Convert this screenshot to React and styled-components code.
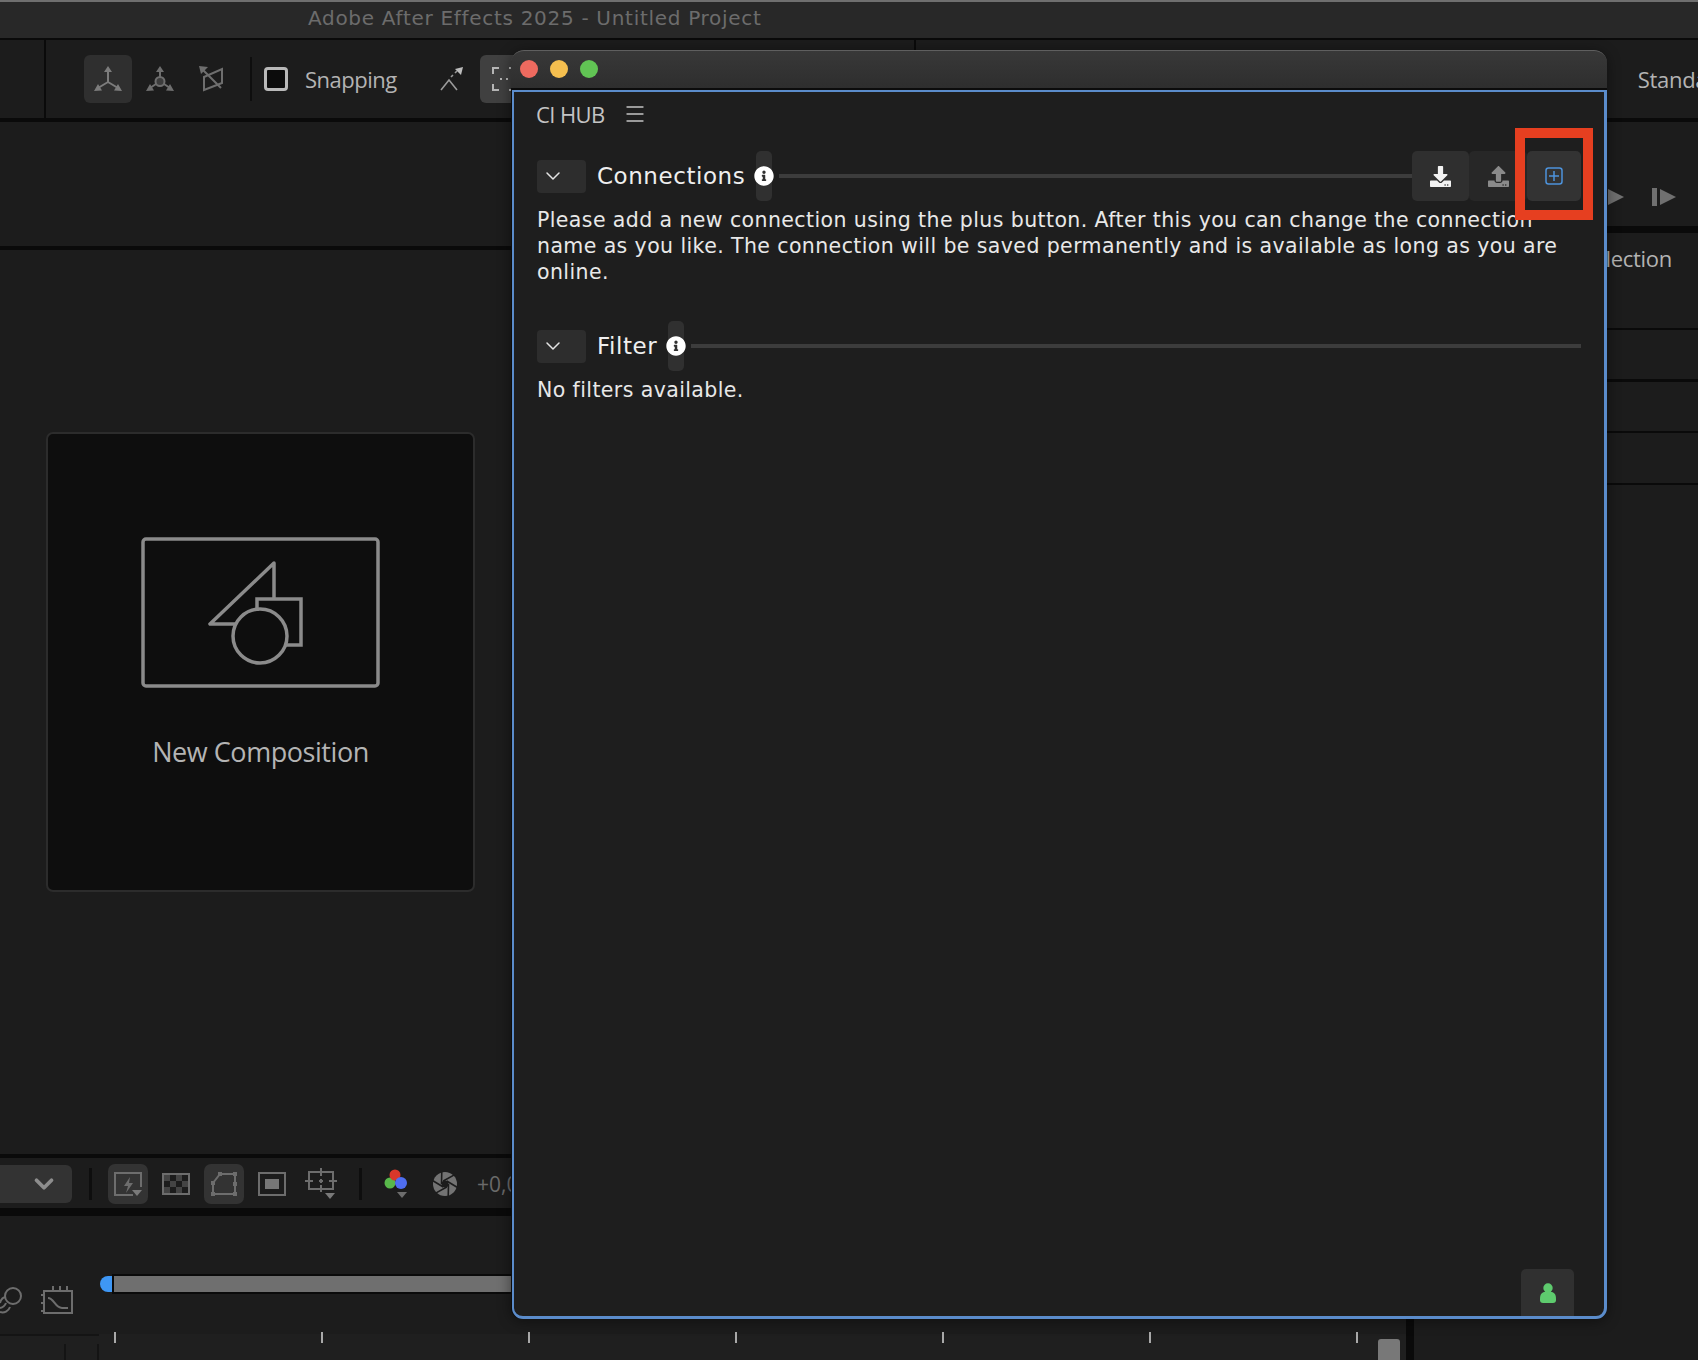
import React from "react";
import styled, { createGlobalStyle } from "styled-components";
import { ChevronDown, Menu } from "lucide-react";
import { FaDownload, FaUpload, FaInfoCircle } from "react-icons/fa";

const Global = createGlobalStyle`
  html, body {
    margin: 0;
    padding: 0;
    background: #1c1c1c;
  }
  * {
    box-sizing: border-box;
  }
`;

// blades of the exposure shutter icon
const shutterLines = [0, 60, 120, 180, 240, 300].map((deg) => {
  const a = (deg * Math.PI) / 180;
  const b = ((deg + 75) * Math.PI) / 180;
  return `M${13 + 3.5 * Math.cos(a)} ${13 + 3.5 * Math.sin(a)}L${13 + 12.5 * Math.cos(b)} ${13 + 12.5 * Math.sin(b)}`;
});

const App = () => {
  return (
    <Page>
      <Global />
      <AppTitle>Adobe After Effects 2025 - Untitled Project</AppTitle>
      <Toolbar>
        <ToolbarStart />
        <ModeButton $active>
          <svg width="28" height="26" viewBox="0 0 28 26" fill="none" stroke="#7c7c7c" strokeWidth="2">
            <path d="M14 4v12M14 16L4 22M14 16l10 6" />
            <path d="M14 0l-4 6h8zM0 25l8-.5-4-6.500zM28 25l-8-.5 4-6.500z" fill="#7c7c7c" stroke="none" />
          </svg>
        </ModeButton>
        <ModeIcon>
          <svg width="28" height="26" viewBox="0 0 28 26" fill="none" stroke="#6e6e6e" strokeWidth="2">
            <circle cx="14" cy="15.500" r="4.500" fill="#3c3c3c" />
            <path d="M14 4v7M10 18l-6 4M18 18l6 4" />
            <path d="M14 0l-4 6h8zM0 25l8-.5-4-6.500zM28 25l-8-.5 4-6.500z" fill="#6e6e6e" stroke="none" />
          </svg>
        </ModeIcon>
        <ModeIcon>
          <svg width="26" height="26" viewBox="0 0 26 26" fill="none" stroke="#6e6e6e" strokeWidth="2">
            <path d="M5 11L23 3v14L5 24zM4 4l18 18" />
            <path d="M0 0l9 1-7 7z" fill="#6e6e6e" stroke="none" />
          </svg>
        </ModeIcon>
        <ToolSeparator />
        <SnapBox />
        <SnapLabel>Snapping</SnapLabel>
        <SnapIcon>
          <svg width="24" height="24" viewBox="0 0 24 24" fill="none" stroke="#9a9a9a" strokeWidth="1.6">
            <path d="M1 23l8-10 8 10" />
            <path d="M11 10l2-2M15 6l2-2" />
            <path d="M23 0l-8 2 6 6z" fill="#bdbdbd" stroke="none" />
          </svg>
        </SnapIcon>
        <SelectedTool>
          <svg width="24" height="24" viewBox="0 0 24 24" fill="none" stroke="#b5b5b5" strokeWidth="2">
            <path d="M1 7V1h6M23 7V1h-6M1 17v6h6M23 17v6h-6M8 12h2M14 12h2" />
          </svg>
        </SelectedTool>
        <ToolTick />
        <WorkspaceLabel>Standard</WorkspaceLabel>
      </Toolbar>

      <Workspace>
        <LeftColumn>
          <ViewerHead />
          <CompArea>
            <NewCompCard>
              <svg width="240" height="152" viewBox="0 0 240 152" fill="none" stroke="#8b8b8b" strokeWidth="3.5">
                <rect x="2" y="2" width="235" height="147" rx="3" />
                <path d="M133 62V26L69 87h27" strokeLinejoin="round" />
                <path d="M116 74V62h44v46h-16" />
                <circle cx="119" cy="99" r="27" />
              </svg>
              <NewCompLabel>New Composition</NewCompLabel>
            </NewCompCard>
          </CompArea>
          <CompToolbar>
            <ZoomSelect>
              <ChevronDown size={30} color="#8d8d8d" strokeWidth={3} />
            </ZoomSelect>
            <BarSeparator />
            <CompButton $active>
              <svg width="30" height="26" viewBox="0 0 30 26" fill="none" stroke="#6d6d6d" strokeWidth="2">
                <path d="M20 24H2V2h26v14" />
                <path d="M17 6l-6 9h4l-2 7 7-10h-4z" fill="#6d6d6d" stroke="none" />
                <path d="M19 19h10l-5 6z" fill="#7a7a7a" stroke="none" />
              </svg>
            </CompButton>
            <CompIcon $width="56px">
              <svg width="28" height="22" viewBox="0 0 28 22">
                <rect x="1" y="1" width="26" height="20" fill="#1c1c1c" stroke="#6d6d6d" strokeWidth="2" />
                <path d="M2 2h6v6H2zM14 2h6v6h-6zM8 8h6v6H8zM20 8h6v6h-6zM2 14h6v6H2zM14 14h6v6h-6z" fill="#444" />
              </svg>
            </CompIcon>
            <CompButton $active>
              <svg width="30" height="26" viewBox="0 0 30 26" fill="none" stroke="#6d6d6d" strokeWidth="2">
                <path d="M4 23h22M26 23V3H11L4 12v11" />
                <path d="M2 21h4v4H2zM24 21h4v4h-4zM24 1h4v4h-4zM9 1h4v4H9zM2 10h4v4H2zM24 11h4v4h-4z" fill="#6d6d6d" stroke="none" />
              </svg>
            </CompButton>
            <CompIcon $width="56px">
              <svg width="28" height="24" viewBox="0 0 28 24" fill="none">
                <rect x="1" y="1" width="26" height="22" stroke="#6d6d6d" strokeWidth="2" />
                <rect x="7" y="7" width="14" height="10" fill="#777" />
              </svg>
            </CompIcon>
            <CompIcon $width="42px">
              <svg width="32" height="32" viewBox="0 0 32 32" fill="none" stroke="#6d6d6d" strokeWidth="2">
                <path d="M4 4h24v17H4zM0 13h8M24 13h8M16 0v8M16 17v7M14 13h4M16 11v4" />
                <path d="M20 25h10l-5 6z" fill="#7a7a7a" stroke="none" />
              </svg>
            </CompIcon>
            <BarSeparator $left="17px" />
            <CompIcon $width="36px">
              <svg width="24" height="30" viewBox="0 0 24 30">
                <path d="M13 23h10l-5 6z" fill="#6d6d6d" />
                <circle cx="6" cy="14" r="5.500" fill="#58b84a" />
                <circle cx="11" cy="6" r="5.500" fill="#d9372a" />
                <circle cx="17" cy="14" r="6" fill="#4f6ef0" />
              </svg>
            </CompIcon>
            <CompIcon $width="62px">
              <svg width="26" height="26" viewBox="0 0 26 26">
                <circle cx="13" cy="13" r="12" fill="#737373" />
                <path d={shutterLines.join("")} stroke="#1c1c1c" strokeWidth="1.6" fill="none" />
                <circle cx="13" cy="13" r="3.500" fill="#1c1c1c" />
              </svg>
            </CompIcon>
            <ExposureValue>+0,0</ExposureValue>
          </CompToolbar>
          <Timeline>
            <TimelineControls>
              <svg width="22" height="30" viewBox="0 0 22 30" fill="none" stroke="#6d6d6d" strokeWidth="2">
                <circle cx="13" cy="11" r="8" />
                <path d="M5 12a8 8 0 0 0 -5 6M6 18a8 8 0 0 1 -6 5M10 22a8 8 0 0 1 -10 5" />
              </svg>
              <svg width="32" height="30" viewBox="0 0 32 30" fill="none" stroke="#6d6d6d" strokeWidth="2">
                <path d="M3 6h28v22H3zM0 10h3M0 18h3M0 26h3M12 1v5M19 1v5M26 1v5" />
                <path d="M7 13c6 0 7 10 14 10h6" />
              </svg>
            </TimelineControls>
            <TimelineTrack>
              <Playhead />
              <WorkBar />
            </TimelineTrack>
          </Timeline>
          <RulerRow>
            <RulerGap $width="66px" />
            <RulerGap $width="33px" />
            <RulerTicks>
              {[0, 1, 2, 3, 4, 5, 6].map((n) => (
                <Tick key={n} />
              ))}
            </RulerTicks>
            <ScrollThumb />
          </RulerRow>
        </LeftColumn>

        <RightColumn>
          <PanelRow $height="111px" $line="7px">
            <Transport>
              <svg width="18" height="18" viewBox="0 0 18 18">
                <path d="M0 1l16 8-16 8z" fill="#707070" />
              </svg>
              <svg width="24" height="18" viewBox="0 0 24 18">
                <path d="M0 0h5v18H0zM8 1l16 8-16 8z" fill="#707070" />
              </svg>
            </Transport>
          </PanelRow>
          <PanelRow $height="97px" $line="2px">
            <PanelTitle>Selection</PanelTitle>
          </PanelRow>
          <PanelRow $height="52px" $line="3px" />
          <PanelRow $height="51px" $line="2px" />
          <PanelRow $height="52px" $line="2px" />
        </RightColumn>
      </Workspace>

      <PluginWindow>
        <WindowBar>
          <Light $color="#ee6a5f" />
          <Light $color="#f5bf4f" />
          <Light $color="#61c454" />
        </WindowBar>
        <Panel>
          <PanelHeader>
            <Brand>CI HUB</Brand>
            <Menu size={24} color="#c4c4c4" strokeWidth={1.3} />
          </PanelHeader>

          <SectionHead>
            <Collapse>
              <ChevronDown size={24} color="#e4e4e4" strokeWidth={1.5} />
            </Collapse>
            <SectionTitle>Connections</SectionTitle>
            <InfoButton>
              <FaInfoCircle size={20} color="#fff" />
            </InfoButton>
            <SectionLine />
            <HeadAction $width="57px" $bg="#2f2f2f">
              <FaDownload size={21} color="#f2f2f2" />
            </HeadAction>
            <HeadAction $width="58px" $bg="#272727">
              <FaUpload size={21} color="#8a8a8a" />
            </HeadAction>
            <HeadAction $width="54px" $bg="#333333">
              <svg width="18" height="18" viewBox="0 0 18 18" fill="none" stroke="#4d93dc" strokeWidth="1.5">
                <rect x="1" y="1" width="16" height="16" rx="2.500" />
                <path d="M9 4v10M4 9h10" />
              </svg>
            </HeadAction>
          </SectionHead>
          <SectionText>
            Please add a new connection using the plus button. After this you can change the connection name as you
            like. The connection will be saved permanently and is available as long as you are online.
          </SectionText>

          <SectionHead $top="36px">
            <Collapse>
              <ChevronDown size={24} color="#e4e4e4" strokeWidth={1.5} />
            </Collapse>
            <SectionTitle>Filter</SectionTitle>
            <InfoButton>
              <FaInfoCircle size={20} color="#fff" />
            </InfoButton>
            <SectionLine />
          </SectionHead>
          <SectionText>No filters available.</SectionText>

          <PanelFooter>
            <UserButton>
              <svg width="16" height="20" viewBox="0 0 16 20" fill="#5ecb6e">
                <circle cx="8" cy="5" r="4.700" />
                <path d="M0 16c0-5 2-7 5-7h6c3 0 5 2 5 7v1c0 2-1 3-3 3H3c-2 0-3-1-3-3z" />
              </svg>
            </UserButton>
          </PanelFooter>
        </Panel>
        <Callout />
      </PluginWindow>
    </Page>
  );
};

const Page = styled.div`
  position: relative;
  width: 1698px;
  height: 1360px;
  overflow: hidden;
  background: #1c1c1c;
  display: flex;
  flex-direction: column;
`;

const AppTitle = styled.div`
  height: 40px;
  padding-left: 308px;
  background: #282828;
  border-top: 2px solid #6f6f6f;
  border-bottom: 2px solid #0a0a0a;
  color: #6c6c6c;
  font-family: "DejaVu Sans", sans-serif;
  font-size: 20px;
  line-height: 33px;
  letter-spacing: 0.7px;
`;

const Toolbar = styled.div`
  height: 82px;
  display: flex;
  align-items: center;
  border-bottom: 4px solid #0a0a0a;
  overflow: hidden;
  font-family: "Open Sans", sans-serif;

  > * {
    flex-shrink: 0;
  }
`;

const ToolbarStart = styled.div`
  width: 46px;
  height: 100%;
  border-right: 2px solid #0a0a0a;
  margin-right: 38px;
`;

const ModeButton = styled.div`
  width: 48px;
  height: 48px;
  border-radius: 6px;
  background: #2f2f2f;
  display: flex;
  align-items: center;
  justify-content: center;
`;

const ModeIcon = styled.div`
  width: 56px;
  display: flex;
  justify-content: center;
  margin-right: -4px;
`;

const ToolSeparator = styled.div`
  width: 2px;
  height: 44px;
  margin: 0 12px 0 14px;
  background: #0e0e0e;
`;

const SnapBox = styled.div`
  width: 24px;
  height: 24px;
  border: 3px solid #b9b9b9;
  border-radius: 4px;
  background: #0c0c0c;
`;

const SnapLabel = styled.span`
  margin-left: 17px;
  color: #b3b3b3;
  font-size: 22px;
  letter-spacing: -0.5px;
`;

const SnapIcon = styled.div`
  margin-left: 43px;
  display: flex;
`;

const SelectedTool = styled.div`
  width: 60px;
  height: 48px;
  margin-left: 16px;
  padding-left: 12px;
  border-radius: 6px;
  background: #404040;
  display: flex;
  align-items: center;
`;

const ToolTick = styled.div`
  width: 2px;
  height: 100%;
  margin-left: 374px;
  background: #0a0a0a;
`;

const WorkspaceLabel = styled.span`
  margin-left: 722px;
  color: #b3b3b3;
  font-size: 22px;
  letter-spacing: -0.3px;
  white-space: nowrap;
`;

const Workspace = styled.div`
  flex: 1;
  min-height: 0;
  display: grid;
  grid-template-columns: 1406px 284px;
  column-gap: 8px;
  background: #0a0a0a;
`;

const LeftColumn = styled.div`
  display: flex;
  flex-direction: column;
  background: #0a0a0a;
`;

const ViewerHead = styled.div`
  height: 124px;
  background: #1c1c1c;
`;

const CompArea = styled.div`
  height: 904px;
  margin-top: 4px;
  padding: 182px 0 0 46px;
  background: #1c1c1c;
`;

const NewCompCard = styled.div`
  width: 429px;
  height: 460px;
  padding-top: 103px;
  background: #0e0e0e;
  border: 2px solid #2c2c2c;
  border-radius: 7px;
  display: flex;
  flex-direction: column;
  align-items: center;
`;

const NewCompLabel = styled.div`
  margin-top: 44px;
  color: #b4b4b4;
  font-family: "Open Sans", sans-serif;
  font-size: 27px;
  letter-spacing: -0.45px;
`;

const CompToolbar = styled.div`
  height: 50px;
  margin-top: 4px;
  padding-top: 2px;
  background: #1c1c1c;
  display: flex;
  align-items: center;
`;

const ZoomSelect = styled.div`
  width: 72px;
  height: 38px;
  padding-left: 29px;
  background: #333333;
  border-radius: 0 6px 6px 0;
  display: flex;
  align-items: center;
`;

const BarSeparator = styled.div`
  width: 3px;
  height: 32px;
  margin-left: ${(p) => p.$left || "17px"};
  margin-right: 16px;
  background: #0e0e0e;
`;

const CompButton = styled.div`
  width: 40px;
  height: 40px;
  border-radius: 7px;
  background: #333333;
  display: flex;
  align-items: center;
  justify-content: center;
`;

const CompIcon = styled.div`
  width: ${(p) => p.$width};
  display: flex;
  align-items: center;
  justify-content: center;
`;

const ExposureValue = styled.span`
  margin-left: 1px;
  color: #6a6a6a;
  font-family: "Open Sans", sans-serif;
  font-size: 21px;
  white-space: nowrap;
`;

const Timeline = styled.div`
  height: 118px;
  margin-top: 8px;
  background: #1c1c1c;
  display: flex;
`;

const TimelineControls = styled.div`
  width: 100px;
  padding-top: 69px;
  display: flex;
  gap: 19px;
  align-items: flex-start;
`;

const TimelineTrack = styled.div`
  flex: 1;
  padding-top: 58px;
  display: flex;
  align-items: flex-start;
`;

const Playhead = styled.div`
  width: 12px;
  height: 16px;
  margin-top: 2px;
  background: #3e97f5;
  border-radius: 8px 0 0 8px;
`;

const WorkBar = styled.div`
  flex: 1;
  height: 20px;
  background: #6f6f6f;
  border: solid #0a0a0a;
  border-width: 2px 0 2px 2px;
`;

const RulerRow = styled.div`
  flex: 1;
  display: flex;
  background: #1f1f1f;
`;

const RulerGap = styled.div`
  width: ${(p) => p.$width};
  border-top: 2px solid #141414;
  background: linear-gradient(#141414, #141414) right bottom / 2px 16px no-repeat;
`;

const RulerTicks = styled.div`
  width: 1279px;
  padding-left: 15px;
  margin-top: -2px;
  display: flex;
`;

const Tick = styled.div`
  flex: 0 0 207px;
  height: 11px;
  border-left: 2px solid #a9a9a9;
`;

const ScrollThumb = styled.div`
  width: 22px;
  height: 21px;
  margin-top: 5px;
  background: #787878;
  border-radius: 3px 3px 0 0;
`;

const RightColumn = styled.div`
  display: flex;
  flex-direction: column;
  background: #1c1c1c;
`;

const PanelRow = styled.div`
  height: ${(p) => p.$height};
  flex-shrink: 0;
  border-bottom: ${(p) => p.$line} solid #0a0a0a;
`;

const Transport = styled.div`
  height: 100%;
  padding: 46px 22px 0 0;
  display: flex;
  align-items: center;
  justify-content: flex-end;
  gap: 26px;
`;

const PanelTitle = styled.div`
  padding: 10px 26px 0 0;
  text-align: right;
  color: #b3b3b3;
  font-family: "Open Sans", sans-serif;
  font-size: 22px;
  letter-spacing: -0.3px;
`;

const PluginWindow = styled.div`
  position: absolute;
  left: 511px;
  top: 50px;
  width: 1096px;
  height: 1269px;
  display: flex;
  flex-direction: column;
  border-radius: 13px 13px 11px 11px;
  background: #0c0c0c;
  box-shadow: 0 2px 14px rgba(0, 0, 0, 0.45);
`;

const WindowBar = styled.div`
  height: 38px;
  padding: 0 0 1px 9px;
  display: flex;
  align-items: center;
  gap: 12px;
  background: linear-gradient(#383838, #2e2e2e);
  border-top: 1px solid #5f5f5f;
  border-radius: 13px 13px 0 0;
`;

const Light = styled.span`
  width: 18px;
  height: 18px;
  border-radius: 50%;
  background: ${(p) => p.$color};
`;

const Panel = styled.div`
  flex: 1;
  min-height: 0;
  margin-top: 2px;
  margin-left: 1px;
  padding: 0 23px;
  display: flex;
  flex-direction: column;
  background: #1e1e1e;
  border: 2px solid #5b8ccb;
  border-width: 2px 3px 3px 2px;
  border-radius: 0 0 11px 11px;
  font-family: "DejaVu Sans", sans-serif;
`;

const PanelHeader = styled.div`
  height: 44px;
  margin-bottom: 15px;
  display: flex;
  align-items: center;
  gap: 18px;
`;

const Brand = styled.span`
  color: #c4c4c4;
  font-family: "Open Sans", sans-serif;
  font-size: 22px;
  letter-spacing: -0.6px;
  margin-left: -1px;
`;

const SectionHead = styled.div`
  height: 50px;
  margin-top: ${(p) => p.$top || "0"};
  display: flex;
  align-items: center;
  flex-shrink: 0;
`;

const Collapse = styled.div`
  width: 49px;
  height: 33px;
  padding-left: 4px;
  background: #2d2d2d;
  border-radius: 4px;
  display: flex;
  align-items: center;
`;

const SectionTitle = styled.span`
  margin-left: 11px;
  color: #efefef;
  font-size: 23px;
  letter-spacing: 0.55px;
`;

const InfoButton = styled.div`
  width: 16px;
  height: 50px;
  margin-left: 11px;
  background: #303030;
  border-radius: 5px;
  display: flex;
  align-items: center;
  justify-content: center;

  svg {
    flex-shrink: 0;
  }
`;

const SectionLine = styled.div`
  flex: 1;
  height: 4px;
  margin-left: 7px;
  background: #3c3c3c;
`;

const HeadAction = styled.div`
  width: ${(p) => p.$width};
  height: 50px;
  background: ${(p) => p.$bg};
  border-radius: 5px;
  display: flex;
  align-items: center;
  justify-content: center;
`;

const SectionText = styled.p`
  margin: 6px 0 0;
  color: #e8e8e8;
  font-size: 20.5px;
  line-height: 26px;
  letter-spacing: 0.4px;
`;

const PanelFooter = styled.div`
  margin-top: auto;
  padding-right: 7px;
  display: flex;
  justify-content: flex-end;
`;

const UserButton = styled.div`
  width: 53px;
  height: 47px;
  background: #303030;
  border-radius: 5px 5px 0 0;
  display: flex;
  align-items: center;
  justify-content: center;
`;

const Callout = styled.div`
  position: absolute;
  left: 1004px;
  top: 78px;
  width: 78px;
  height: 92px;
  border: 10px solid #e63f20;
`;

export default App;
